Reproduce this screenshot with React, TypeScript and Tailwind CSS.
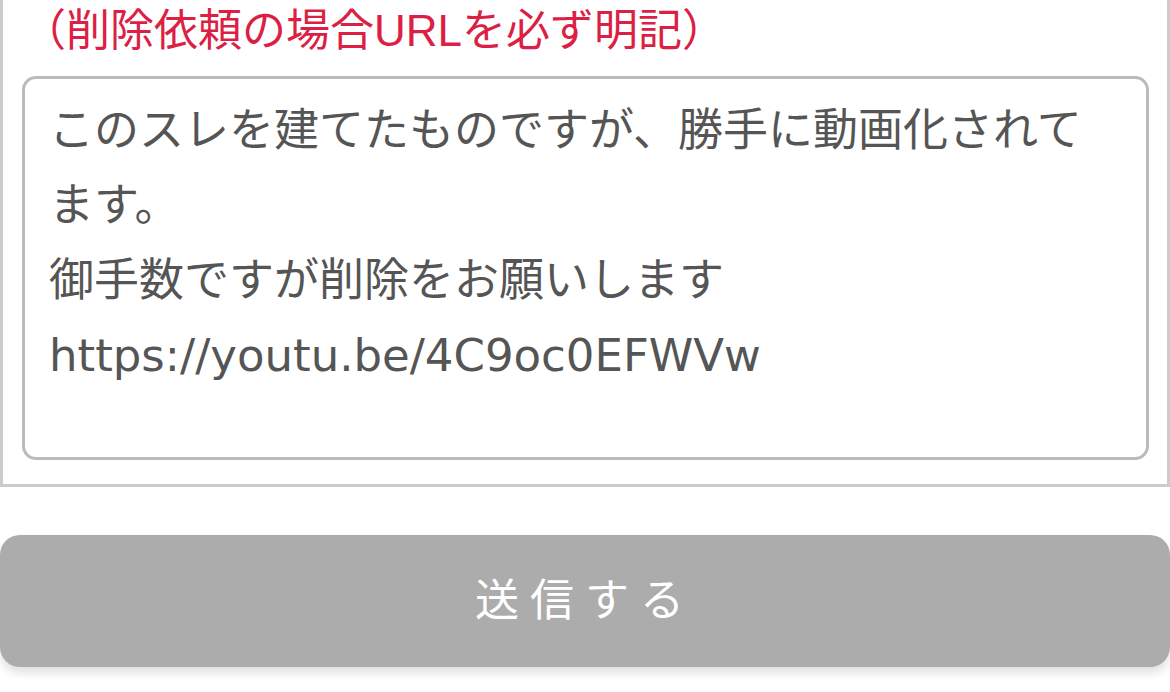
import React from 'react';

const message = `このスレを建てたものですが、勝手に動画化されてます。
御手数ですが削除をお願いします
https://youtu.be/4C9oc0EFWVw`;

const App: React.FC = () => {
  return (
    <div className="w-[1170px] h-[692px] bg-white overflow-hidden" style={{ fontFamily: '"Liberation Sans", "Noto Sans CJK JP", sans-serif' }}>
      <div className="border-x-[3px] border-b-[3px] border-[#cccccc] pl-[19px] pr-[18px] pt-[6px] pb-[24px]">
        <p className="text-[44px] leading-[50px] text-[#dc1f45]">（削除依頼の場合URLを必ず明記）</p>
        <textarea
          className="mt-[20px] block w-full h-[384px] resize-none rounded-[14px] border-[3px] border-[#bbbbbb] pl-[24px] pr-[40px] pt-[14px] font-['DejaVu_Sans','Noto_Sans_CJK_JP',sans-serif] text-[45px] leading-[75px] text-[#555555] outline-none"
          defaultValue={message}
        />
      </div>
      <button className="mt-[48px] flex h-[132px] w-full items-center justify-center rounded-[20px] bg-[#acacac] text-[44px] tracking-[11px] text-white shadow-[0_6px_10px_rgba(0,0,0,0.12)]">
        送信する
      </button>
    </div>
  );
};

export default App;
